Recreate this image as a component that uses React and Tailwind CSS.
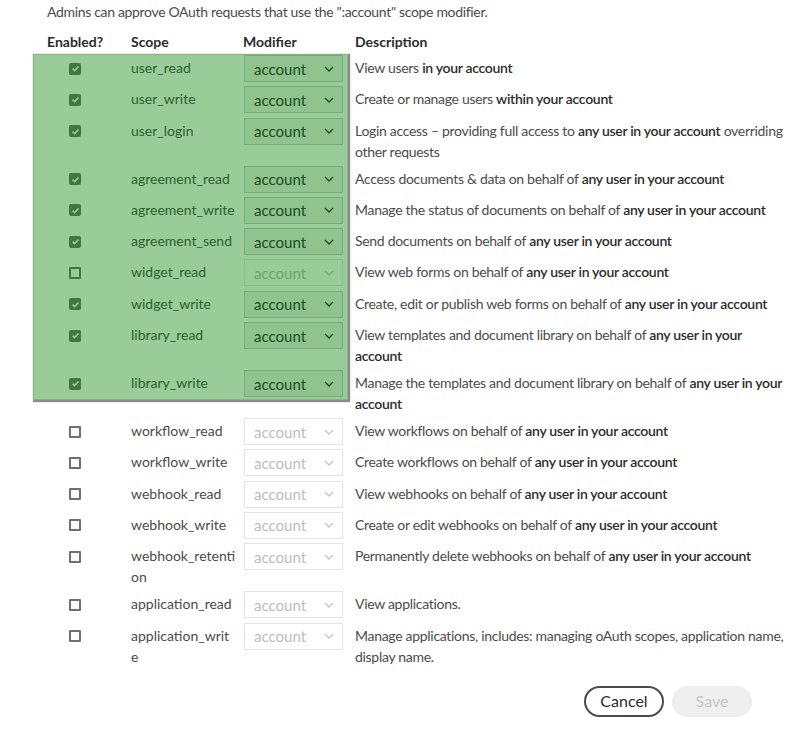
import React from "react";

const B = "any user in your account";
const rows = [
  { s: "user_read", c: true, d: [["View users "], ["in your account", 1]] },
  { s: "user_write", c: true, d: [["Create or manage users "], ["within your account", 1]] },
  { s: "user_login", c: true, d: [["Login access \u2013 providing full access to "], [B, 1], [" overriding other requests"]] },
  { s: "agreement_read", c: true, d: [["Access documents & data on behalf of "], [B, 1]] },
  { s: "agreement_write", c: true, d: [["Manage the status of documents on behalf of "], [B, 1]] },
  { s: "agreement_send", c: true, d: [["Send documents on behalf of "], [B, 1]] },
  { s: "widget_read", c: false, d: [["View web forms on behalf of "], [B, 1]] },
  { s: "widget_write", c: true, d: [["Create, edit or publish web forms on behalf of "], [B, 1]] },
  { s: "library_read", c: true, d: [["View templates and document library on behalf of "], [B, 1]] },
  { s: "library_write", c: true, d: [["Manage the templates and document library on behalf of "], [B, 1]] },
  { s: "workflow_read", c: false, d: [["View workflows on behalf of "], [B, 1]] },
  { s: "workflow_write", c: false, d: [["Create workflows on behalf of "], [B, 1]] },
  { s: "webhook_read", c: false, d: [["View webhooks on behalf of "], [B, 1]] },
  { s: "webhook_write", c: false, d: [["Create or edit webhooks on behalf of "], [B, 1]] },
  { s: ["webhook_retenti", "on"], c: false, d: [["Permanently delete webhooks on behalf of "], [B, 1]] },
  { s: "application_read", c: false, d: [["View applications."]] },
  { s: ["application_writ", "e"], c: false, d: [["Manage applications, includes: managing oAuth scopes, application name, display name."]] },
];

function Checkbox({ checked }) {
  if (checked) {
    return (
      <div className="w-[12px] h-[12px] rounded-[2px] bg-[#707070] flex items-center justify-center">
        <svg width="9" height="9" viewBox="0 0 10 10">
          <polyline points="1.8,5.2 4,7.3 8.3,2.8" fill="none" stroke="#ffffff" strokeWidth="1.8" />
        </svg>
      </div>
    );
  }
  return <div className="w-[12px] h-[12px] rounded-[1px] border-2 border-[#707070] bg-white" />;
}

function Select({ enabled }) {
  return (
    <div
      className={
        "w-[99px] h-[27px] flex items-center justify-between pl-[9px] pr-[8px] border text-[15px] " +
        (enabled ? "bg-[#f0f0f0] border-[#c8c8c8] text-[#2c2c2c]" : "bg-white border-[#e4e4e4] text-[#bdbdbd]")
      }
    >
      <span className="leading-none pt-[1px]">account</span>
      <svg width="10" height="6" viewBox="0 0 10 6">
        <polyline
          points="1,1 5,5 9,1"
          fill="none"
          stroke={enabled ? "#2c2c2c" : "#c4c4c4"}
          strokeWidth="1.3"
        />
      </svg>
    </div>
  );
}

export default function App() {
  return (
    <div className="relative w-[798px] h-[732px] bg-white overflow-hidden font-['Lato',sans-serif] text-[14px] text-[#4b4b4b]">
      <div className="pl-[47px] pt-[1px] leading-[21px] tracking-[-0.33px]">
        Admins can approve OAuth requests that use the ":account" scope modifier.
      </div>
      <div className="pl-[47px] pt-[9px]">
        <div className="grid grid-cols-[84px_112px_112px_433px] font-bold text-[#2c2c2c] leading-[22px]">
          <div>Enabled?</div>
          <div>Scope</div>
          <div>Modifier</div>
          <div>Description</div>
        </div>
        <div className="flex flex-col">
          {rows.map((r) => {
            const key = Array.isArray(r.s) ? r.s.join("") : r.s;
            return (
              <div key={key} className="grid grid-cols-[84px_112px_112px_433px] py-[2px] items-start">
                <div className="pl-[22px] pt-[7.5px]">
                  <Checkbox checked={r.c} />
                </div>
                <div className="pt-[2px] leading-[21px]">
                  {Array.isArray(r.s) ? (
                    <>
                      {r.s[0]}
                      <br />
                      {r.s[1]}
                    </>
                  ) : (
                    r.s
                  )}
                </div>
                <div className="h-[27.3px] pl-[1px]">
                  <Select enabled={r.c} />
                </div>
                <div className="pt-[2px] leading-[21px] tracking-[-0.3px]">
                  {r.d.map(([t, b], i) =>
                    b ? (
                      <span key={i} className="font-semibold text-[#2c2c2c]">
                        {t}
                      </span>
                    ) : (
                      <span key={i}>{t}</span>
                    )
                  )}
                </div>
              </div>
            );
          })}
        </div>
      </div>
      <div className="flex justify-end gap-[8px] pr-[46px] pt-[17px]">
        <button className="w-[80px] h-[31px] rounded-full border-2 border-[#4b4b4b] text-[#2c2c2c] text-[16px] leading-none">
          Cancel
        </button>
        <button className="w-[80px] h-[31px] rounded-full bg-[#efefef] text-[#c6c6c6] text-[16px] leading-none">
          Save
        </button>
      </div>
      <div className="absolute left-[33px] top-[54px] w-[315px] h-[346px] bg-[rgba(0,128,0,0.4)] border border-[rgba(0,0,0,0.12)] shadow-[1px_1px_1px_1px_rgba(0,0,0,0.45)] pointer-events-none" />
    </div>
  );
}
